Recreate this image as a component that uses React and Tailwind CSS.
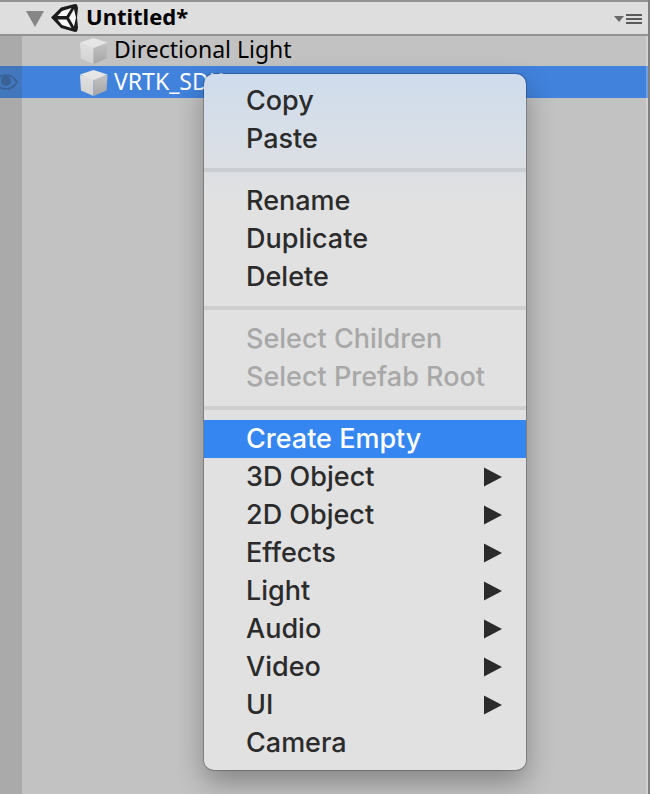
import React from "react";

const menuGroups = [
  [{ label: "Copy" }, { label: "Paste" }],
  [{ label: "Rename" }, { label: "Duplicate" }, { label: "Delete" }],
  [
    { label: "Select Children", disabled: true },
    { label: "Select Prefab Root", disabled: true },
  ],
  [
    { label: "Create Empty", active: true },
    { label: "3D Object", submenu: true },
    { label: "2D Object", submenu: true },
    { label: "Effects", submenu: true },
    { label: "Light", submenu: true },
    { label: "Audio", submenu: true },
    { label: "Video", submenu: true },
    { label: "UI", submenu: true },
    { label: "Camera" },
  ],
];

function UnityLogo() {
  return (
    <svg className="h-7 w-7 shrink-0" viewBox="0 0 28 28" aria-hidden="true">
      <path d="M0 13.500 L10 3.500 L24 0 L26 0.500 L27 4 L26 13.500 L27 24 L26 27.500 L24 28 L10 24 Z" fill="#1c1c1c" />
      <path d="M11 7 L20.500 4 L15.500 12 L6.500 12 Z" fill="#f8f8f8" />
      <path d="M6.500 15.500 L15.500 15.500 L20.500 24 L11 21 Z" fill="#f8f8f8" />
      <path d="M23 5 L25 13.750 L23 22.500 L18 13.750 Z" fill="#f8f8f8" />
    </svg>
  );
}

function CubeIcon() {
  return (
    <svg className="h-7 w-7 shrink-0" viewBox="0 0 28 28" aria-hidden="true">
      <defs>
        <linearGradient id="cubeLeft" x1="0" y1="0" x2="0" y2="1">
          <stop offset="0" stopColor="#e0e0e0" />
          <stop offset="1" stopColor="#d2d2d2" />
        </linearGradient>
        <linearGradient id="cubeRight" x1="0" y1="0" x2="0" y2="1">
          <stop offset="0" stopColor="#c2c2c2" />
          <stop offset="1" stopColor="#a6a6a6" />
        </linearGradient>
      </defs>
      <path d="M0 7 L13.500 10 L13.500 28 L1 22.500 Z" fill="url(#cubeLeft)" />
      <path d="M27.500 7 L13.500 10 L13.500 28 L26.500 22.500 Z" fill="url(#cubeRight)" />
      <path d="M0 6.500 L13.500 2 L27.500 6.500 L13.500 12 Z" fill="#e6e6e6" />
    </svg>
  );
}

function EyeIcon() {
  return (
    <svg className="h-4 w-[18px]" viewBox="0 0 18 16" aria-hidden="true">
      <path
        d="M-6 8 C-2 2.500 2 1 6 1 C10.500 1 14.500 3.500 17 8 C14.500 12.500 10.500 15 6 15 C2 15 -2 13.500 -6 8 Z"
        fill="none"
        stroke="#3a6196"
        strokeWidth="1.600"
      />
      <circle cx="6" cy="7" r="5" fill="#3a6196" />
    </svg>
  );
}

function TreeRow({ label, selected }) {
  return (
    <li
      role="treeitem"
      aria-selected={!!selected}
      className={
        selected
          ? "flex h-8 border-r-2 border-white/25 bg-[#4182dc] text-white"
          : "flex h-8 border-r-2 border-white/25 text-black"
      }
    >
      <span
        className={
          selected ? "flex w-[22px] shrink-0 items-center bg-[#4377bd]" : "w-[22px] shrink-0 bg-[#aaaaaa]"
        }
      >
        {selected && <EyeIcon />}
      </span>
      <button type="button" className="flex flex-1 items-center gap-[6px] pl-[58px] text-left text-[23px] leading-7">
        <CubeIcon />
        <span className="pb-[2px]">{label}</span>
      </button>
    </li>
  );
}

function MenuItem({ label, disabled, active, submenu }) {
  const tone = disabled ? "text-[#a8a8a8]" : active ? "bg-[#3586f1] text-white" : "text-[#2b2b2b]";
  return (
    <button
      type="button"
      role="menuitem"
      disabled={disabled}
      aria-haspopup={submenu ? "menu" : undefined}
      className={`flex h-[38px] w-full items-center justify-between pr-6 pl-[42px] text-left text-[27px] leading-[38px] font-medium ${tone}`}
    >
      <span>{label}</span>
      {submenu && (
        <svg className="h-5 w-[18px]" viewBox="0 0 18 20" aria-hidden="true">
          <path d="M0 0.500 L18 10 L0 19.500 Z" fill="#2b2b2b" />
        </svg>
      )}
    </button>
  );
}

function ContextMenu() {
  return (
    <div
      role="menu"
      aria-label="Object actions"
      className="absolute top-[74px] left-[204px] z-20 w-[322px] overflow-hidden rounded-[10px] bg-[#e1e1e1] bg-linear-to-b from-[#cfdcec] from-0% to-[#e1e1e1] to-[130px] py-2 font-[Inter,sans-serif] shadow-[0_0_0_1px_rgba(0,0,0,0.22),0_12px_28px_rgba(0,0,0,0.32)]"
    >
      {menuGroups.map((group, i) => (
        <React.Fragment key={i}>
          {i > 0 && <div role="separator" className="my-[10px] h-1 bg-black/8" />}
          {group.map((item) => (
            <MenuItem key={item.label} {...item} />
          ))}
        </React.Fragment>
      ))}
    </div>
  );
}

export default function App() {
  return (
    <main className="relative flex min-h-screen flex-col overflow-hidden border-r-2 border-[#808080] bg-[#c2c2c2] font-['Noto_Sans',sans-serif]">
      <header className="relative z-10 -mb-[2px] flex h-9 items-center justify-between border-y-2 border-[#929292] bg-[#dedede] pr-[6px] pl-[26px]">
        <button type="button" aria-expanded="true" className="flex items-center text-[22px] leading-7 font-bold text-black">
          <svg className="mr-[7px] h-[18px] w-[18px]" viewBox="0 0 18 18" aria-hidden="true">
            <path d="M0 2 H18 L9 18 Z" fill="#868686" />
          </svg>
          <UnityLogo />
          <span className="ml-[7px] pb-1">Untitled*</span>
        </button>
        <button type="button" aria-label="Scene options" className="flex items-center">
          <svg className="h-[14px] w-7" viewBox="0 0 28 14" aria-hidden="true">
            <path d="M0 5 H10 L5 11 Z" fill="#6a6a6a" />
            <path d="M12 4 H28 M12 8 H28 M12 12 H28" stroke="#5a5a5a" strokeWidth="2" />
          </svg>
        </button>
      </header>
      <ul role="tree" aria-label="Hierarchy">
        <TreeRow label="Directional Light" />
        <TreeRow label="VRTK_SDK" selected />
      </ul>
      <div className="flex flex-1 border-r-2 border-white/25">
        <div className="w-[22px] bg-[#aaaaaa]" />
      </div>
      <ContextMenu />
    </main>
  );
}
